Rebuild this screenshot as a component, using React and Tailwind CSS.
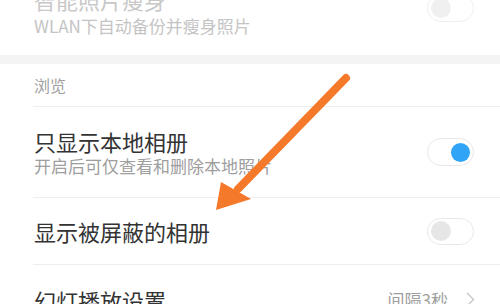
export default function App() {
  const font = { fontFamily: '"Noto Sans CJK SC", "Noto Sans", sans-serif' };
  return (
    <div className="relative w-[500px] h-[304px] overflow-hidden bg-white" style={font}>
      {/* top (cut) section */}
      <div className="h-[55px] flex items-start justify-between pl-[34px] pr-[26px]">
        <div className="flex flex-col">
          <div className="-mt-[12px] text-[22px] leading-[22px] text-[#c8c8c8]">智能照片瘦身</div>
          <div className="mt-[7px] text-[17px] leading-[17px] text-[#c4c4c4]">WLAN下自动备份并瘦身照片</div>
        </div>
        <div className="-mt-[6px] w-[47px] h-[28px] rounded-full border border-[#f0f0f0] flex items-center px-[3px]">
          <div className="w-[20px] h-[20px] rounded-full bg-[#f0f0f0]" />
        </div>
      </div>
      <div className="h-[9px] bg-[#f4f4f4]" />
      {/* header */}
      <div className="h-[42px] pl-[34px] pt-[13px]">
        <div className="text-[16px] leading-[16px] text-[#a0a0a0]">浏览</div>
      </div>
      <div className="ml-[33px] h-px bg-[#eeeeee]" />
      {/* row 1 */}
      <div className="h-[90px] flex items-center justify-between pl-[34px] pr-[26px]">
        <div className="flex flex-col gap-[5px]">
          <div className="text-[22px] leading-[22px] text-[#333333]">只显示本地相册</div>
          <div className="text-[17px] leading-[17px] text-[#9e9e9e]">开启后可仅查看和删除本地照片</div>
        </div>
        <div className="w-[47px] h-[28px] rounded-full border border-[#e8e8e8] flex items-center justify-end px-[3px]">
          <div className="w-[19px] h-[19px] rounded-full bg-[#30a5f8]" />
        </div>
      </div>
      <div className="ml-[33px] h-px bg-[#eeeeee]" />
      {/* row 2 */}
      <div className="h-[66px] flex items-center justify-between pl-[34px] pr-[26px]">
        <div className="text-[22px] leading-[22px] text-[#333333]">显示被屏蔽的相册</div>
        <div className="w-[47px] h-[27px] rounded-full border border-[#e8e8e8] flex items-center px-[3px]">
          <div className="w-[20px] h-[20px] rounded-full bg-[#e6e6e6]" />
        </div>
      </div>
      <div className="ml-[33px] h-px bg-[#eeeeee]" />
      {/* row 3 */}
      <div className="h-[60px] flex items-start justify-between pl-[34px] pr-[25px] pt-[24px]">
        <div className="text-[22px] leading-[22px] text-[#333333]">幻灯播放设置</div>
        <div className="flex items-center gap-[18px] mt-[2px]">
          <span className="text-[17px] leading-[17px] text-[#9e9e9e]">间隔3秒</span>
          <svg width="9" height="15" viewBox="0 0 9 15">
            <path d="M1 1 L7.5 7.5 L1 14" fill="none" stroke="#c4c4c4" strokeWidth="1.3" />
          </svg>
        </div>
      </div>
      {/* arrow overlay */}
      <svg className="absolute left-0 top-0 pointer-events-none" width="500" height="304" viewBox="0 0 500 304">
        <line x1="346" y1="78" x2="238" y2="189" stroke="#f5792a" strokeWidth="8" strokeLinecap="round" />
        <polygon points="216,210 221,182 251,199" fill="#f5792a" />
      </svg>
    </div>
  );
}
